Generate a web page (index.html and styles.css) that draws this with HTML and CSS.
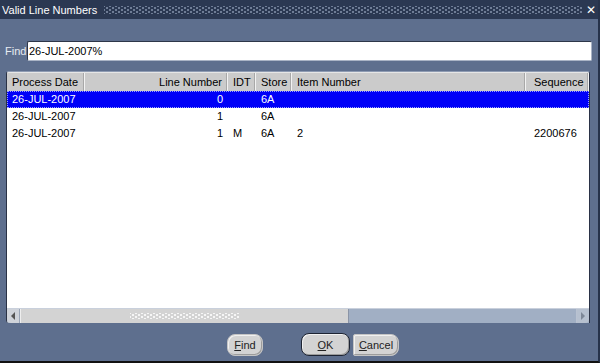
FILE: index.html
```html
<!DOCTYPE html>
<html>
<head>
<meta charset="utf-8">
<link rel="stylesheet" href="styles.css">
</head>
<body>
<div class="window">
  <div class="titlebar">
    <span class="title">Valid Line Numbers</span>
    <span class="grip"></span>
    <span class="close">✕</span>
  </div>
  <div class="content">
    <div class="findrow">
      <label class="findlabel">Find</label>
      <div class="findinput">26-JUL-2007%</div>
    </div>
    <div class="grid">
      <div class="row head">
        <div class="c c1">Process Date</div>
        <div class="c c2 r">Line Number</div>
        <div class="c c3">IDT</div>
        <div class="c c4">Store</div>
        <div class="c c5">Item Number</div>
        <div class="c c6">Sequence</div>
      </div>
      <div class="body">
        <div class="row sel">
          <div class="c c1">26-JUL-2007</div>
          <div class="c c2 r">0</div>
          <div class="c c3"></div>
          <div class="c c4">6A</div>
          <div class="c c5"></div>
          <div class="c c6"></div>
        </div>
        <div class="row">
          <div class="c c1">26-JUL-2007</div>
          <div class="c c2 r">1</div>
          <div class="c c3"></div>
          <div class="c c4">6A</div>
          <div class="c c5"></div>
          <div class="c c6"></div>
        </div>
        <div class="row">
          <div class="c c1">26-JUL-2007</div>
          <div class="c c2 r">1</div>
          <div class="c c3">M</div>
          <div class="c c4">6A</div>
          <div class="c c5">2</div>
          <div class="c c6">2200676</div>
        </div>
      </div>
      <div class="hscroll">
        <div class="arrow left"><svg width="6" height="8" viewBox="0 0 6 8"><path d="M5 0 L1 4 L5 8 Z" fill="#555"/></svg></div>
        <div class="thumb"><span class="dots"></span></div>
        <div class="track"></div>
        <div class="arrow right"><svg width="6" height="8" viewBox="0 0 6 8"><path d="M1 0 L5 4 L1 8 Z" fill="#7d8797"/></svg></div>
      </div>
    </div>
    <div class="buttons">
      <button class="btn b-find"><u>F</u>ind</button>
      <button class="btn b-ok"><u>O</u>K</button>
      <button class="btn b-cancel"><u>C</u>ancel</button>
    </div>
  </div>
</div>
</body>
</html>
```

FILE: styles.css
```css
html, body {
  margin: 0;
  padding: 0;
  background: #000;
}
body {
  font-family: "Liberation Sans", Arial, sans-serif;
  font-size: 11px;
}
.window {
  width: 598px;
  height: 361px;
  background: #5e6f8e;
  border-right: 2px solid #26324a;
  border-bottom: 2px solid #111;
  display: flex;
  flex-direction: column;
}
.titlebar {
  height: 19px;
  background: #2b3852;
  display: flex;
  align-items: center;
  color: #fff;
  padding-left: 2px;
}
.title {
  font-size: 11px;
  white-space: nowrap;
  margin-right: 7px;
}
.grip {
  flex: 1;
  height: 8px;
  margin-top: 1px;
  background-image:
    radial-gradient(circle, #6f7d96 0.9px, transparent 1.2px),
    radial-gradient(circle, #6f7d96 0.9px, transparent 1.2px);
  background-size: 6px 4px;
  background-position: 0 0, 3px 2px;
}
.close {
  width: 14px;
  text-align: center;
  font-size: 12px;
  margin-left: 2px;
}
.content {
  flex: 1;
  display: flex;
  flex-direction: column;
  padding: 0 6px 0 5px;
}
.findrow {
  display: flex;
  align-items: center;
  margin-top: 22px;
  height: 20px;
}
.findlabel {
  color: #e8ecf2;
  width: 22px;
}
.findinput {
  flex: 1;
  height: 18px;
  line-height: 18px;
  background: #fff;
  border-top: 1px solid #2d3649;
  border-left: 1px solid #2d3649;
  border-right: 1px solid #aab4c6;
  border-bottom: 1px solid #aab4c6;
  border-radius: 2px;
  padding-left: 1px;
  color: #000;
}
.grid {
  margin-top: 10px;
  height: 251px;
  margin-left: 1px;
  margin-right: 2px;
  display: flex;
  flex-direction: column;
  border-left: 1px solid #2a3246;
  border-top: 1px solid #8e9bb2;
  border-right: 1px solid #2a3246;
  border-radius: 3px 3px 0 3px;
  background: #fff;
  overflow: hidden;
}
.row {
  display: flex;
  height: 17px;
  line-height: 17px;
  color: #000;
}
.row.head {
  height: 18px;
  line-height: 18px;
  background: #cbcbcb;
  border-top: 1px solid #e6e6e6;
}
.head .c {
  border-right: 1px solid #f2f2f2;
  box-shadow: inset -1px 0 0 #a8a8a8;
}
.c {
  box-sizing: border-box;
  padding-left: 5px;
  white-space: nowrap;
  overflow: hidden;
}
.c.r {
  text-align: right;
  padding-left: 0;
  padding-right: 5px;
}
.c1 { width: 78px; }
.c2 { width: 143px; }
.c3 { width: 28px; }
.c4 { width: 36px; }
.c5 { width: 234px; }
.c6 { flex: 1; padding-left: 8px; }
.body {
  flex: 1;
}
.row.sel {
  background: #0000f8;
  color: #fff;
  outline: 1px dotted #9aa0ff;
  outline-offset: -1px;
}
.hscroll {
  height: 14px;
  display: flex;
  background: #a1afc4;
  border-top: 1px solid #c9d0dc;
}
.arrow {
  width: 12px;
  display: flex;
  align-items: center;
  justify-content: center;
  background: #cfd3da;
  border-radius: 0 0 0 4px;
  border-right: 1px solid #9aa5b7;
}
.arrow.right {
  border-radius: 0 0 4px 0;
  border-right: none;
  border-left: 1px solid #b9c2d1;
  background: #b6c0cf;
}
.thumb {
  width: 327px;
  background: #d3d3d3;
  border-left: 1px solid #eee;
  border-right: 1px solid #8a94a6;
  display: flex;
  align-items: center;
  justify-content: center;
}
.dots {
  width: 110px;
  height: 6px;
  background-image:
    radial-gradient(circle, #f6f6f6 0.9px, transparent 1.2px),
    radial-gradient(circle, #f6f6f6 0.9px, transparent 1.2px);
  background-size: 6px 4px;
  background-position: 0 0, 3px 2px;
}
.track {
  flex: 1;
}
.buttons {
  display: flex;
  align-items: center;
  margin-top: 10px;
  padding-left: 222px;
}
.btn {
  font-family: "Liberation Sans", Arial, sans-serif;
  font-size: 11px;
  background: #d3d3d3;
  color: #222;
  border: 1px solid #c4c4c4;
  border-radius: 8px;
  height: 22px;
  padding: 0;
  box-shadow: inset -1px -1px 0 #9c9c9c, inset 1px 1px 0 #f0f0f0;
}
.b-find { width: 36px; }
.b-ok {
  width: 49px;
  height: 23px;
  margin-left: 38px;
  border: 1px solid #1d2433;
}
.b-cancel {
  width: 46px;
  margin-left: 3px;
  border-radius: 2px 8px 8px 2px;
}
```
